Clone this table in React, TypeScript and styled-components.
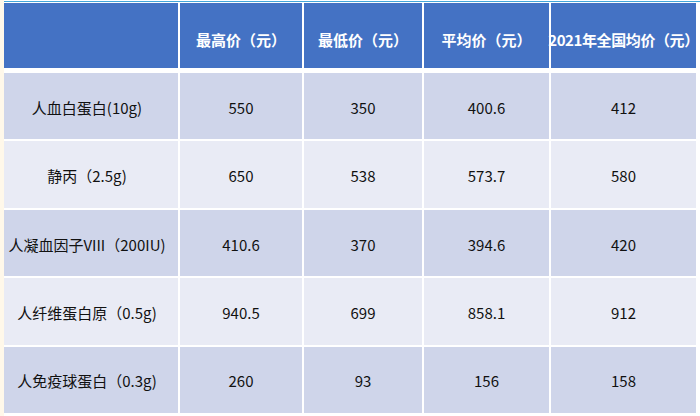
import React from "react";
import styled, { createGlobalStyle } from "styled-components";

const GlobalStyle = createGlobalStyle`
  html, body {
    margin: 0;
    padding: 0;
    background: #ffffff;
  }
  body {
    font-family: "Noto Sans CJK SC", "Noto Sans", sans-serif;
  }
`;

const Page = styled.div`
  display: flex;
  width: 700px;
  height: 416px;
  background: #ffffff;
  overflow: hidden;
`;

const Margin = styled.div`
  width: 4px;
  flex: none;
  background: #fff8ea;
`;

const Frame = styled.div`
  flex: 1;
  display: flex;
  flex-direction: column;
  margin-top: 1px;
  padding-top: 1px;
  border-top: 1px solid #43a6da;
`;

const Table = styled.div`
  width: 692px;
  display: flex;
  flex-direction: column;
`;

const Row = styled.div<{ $header?: boolean }>`
  display: grid;
  grid-template-columns: 174px 122px 118px 125px 145px;
  column-gap: 2px;
  height: ${(p) => (p.$header ? "65px" : "auto")};
  flex: ${(p) => (p.$header ? "none" : "1")};
`;

const Body = styled.div`
  margin-top: 5px;
  height: 340px;
  display: flex;
  flex-direction: column;
  gap: 2px;
`;

const HeadCell = styled.div<{ $tight?: boolean }>`
  display: flex;
  align-items: center;
  justify-content: center;
  padding-top: 7px;
  box-sizing: border-box;
  background: #4472c4;
  color: #ffffff;
  font-weight: 700;
  font-size: 15px;
  letter-spacing: ${(p) => (p.$tight ? "-0.4px" : "0")};
  white-space: nowrap;
`;

const Cell = styled.div<{ $alt: boolean; $first?: boolean }>`
  display: flex;
  align-items: center;
  justify-content: center;
  padding-top: 2px;
  padding-right: ${(p) => (p.$first ? "8px" : "0")};
  box-sizing: border-box;
  background: ${(p) => (p.$alt ? "#e9ebf5" : "#cfd5ea")};
  color: #111111;
  font-size: 15px;
  white-space: nowrap;
`;

const headers = ["", "最高价（元）", "最低价（元）", "平均价（元）", "2021年全国均价（元）"];

const rows: string[][] = [
  ["人血白蛋白(10g)", "550", "350", "400.6", "412"],
  ["静丙（2.5g)", "650", "538", "573.7", "580"],
  ["人凝血因子VIII（200IU)", "410.6", "370", "394.6", "420"],
  ["人纤维蛋白原（0.5g)", "940.5", "699", "858.1", "912"],
  ["人免疫球蛋白（0.3g)", "260", "93", "156", "158"],
];

export default function App() {
  return (
    <>
      <GlobalStyle />
      <Page>
        <Margin />
        <Frame>
          <Table>
            <Row $header>
              {headers.map((h, i) => (
                <HeadCell key={i} $tight={i === 4}>
                  {h}
                </HeadCell>
              ))}
            </Row>
            <Body>
              {rows.map((r, ri) => (
                <Row key={ri}>
                  {r.map((c, ci) => (
                    <Cell key={ci} $alt={ri % 2 === 1} $first={ci === 0}>
                      {c}
                    </Cell>
                  ))}
                </Row>
              ))}
            </Body>
          </Table>
        </Frame>
      </Page>
    </>
  );
}
